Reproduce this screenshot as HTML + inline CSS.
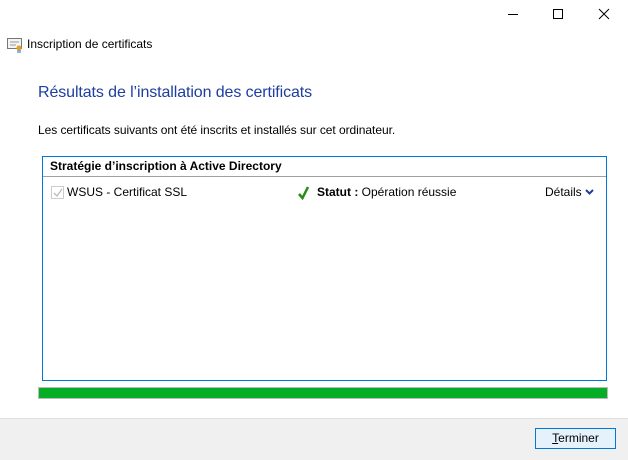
<!DOCTYPE html>
<html><head><meta charset="utf-8"><style>
body{margin:0;width:628px;height:459px;background:#fff;position:relative;font-family:"Segoe UI","Liberation Sans",sans-serif;font-size:12px;color:#000;overflow:hidden}
.a{position:absolute;white-space:nowrap}
</style></head><body>
<svg class="a" style="left:0;top:0" width="628" height="30">
<line x1="508" y1="14.5" x2="518" y2="14.5" stroke="#000"/>
<rect x="553.5" y="9.5" width="9" height="9" fill="none" stroke="#000"/>
<path d="M599 9 L609 19 M609 9 L599 19" stroke="#000"/>
</svg>
<svg class="a" style="left:7px;top:37px" width="17" height="16">
<rect x="0.5" y="1.5" width="14" height="10" fill="#f4f4f4" stroke="#777"/>
<line x1="3" y1="5" x2="12" y2="5" stroke="#999"/><line x1="3" y1="8" x2="9" y2="8" stroke="#999"/>
<circle cx="12" cy="11" r="2.5" fill="#e0a020"/><path d="M11 13 L11 16 M13 13 L13 16" stroke="#2a6ab0"/>
</svg>
<div class="a" style="left:27px;top:37px">Inscription de certificats</div>
<div class="a" style="left:38px;top:84px;font-size:16px;color:#1c3f9f;letter-spacing:-0.1px">Résultats de l’installation des certificats</div>
<div class="a" style="left:38px;top:123px;letter-spacing:-0.05px">Les certificats suivants ont été inscrits et installés sur cet ordinateur.</div>
<div class="a" style="left:42px;top:156px;width:563px;height:223px;border:1px solid #0078d7"></div>
<div class="a" style="left:43px;top:176px;width:563px;height:1px;background:#a0a0a0"></div>
<div class="a" style="left:50px;top:159px;font-weight:bold">Stratégie d’inscription à Active Directory</div>
<div class="a" style="left:51px;top:186px;width:11px;height:11px;border:1px solid #ccc"></div>
<svg class="a" style="left:52px;top:187px" width="12" height="12"><path d="M2 6 L5 9 L10 2" stroke="#bbb" stroke-width="1.3" fill="none"/></svg>
<div class="a" style="left:67px;top:185px">WSUS - Certificat SSL</div>
<svg class="a" style="left:298px;top:186px" width="12" height="14"><path d="M1 8 L4.5 12 L10 1" stroke="#2a8a1a" stroke-width="2.5" fill="none"/></svg>
<div class="a" style="left:317px;top:185px"><b>Statut :</b> Opération réussie</div>
<div class="a" style="left:545px;top:185px">Détails</div>
<svg class="a" style="left:585px;top:189px" width="9" height="6"><path d="M1 1 L4.5 4.5 L8 1" stroke="#1a3e9a" stroke-width="2" fill="none"/></svg>
<div class="a" style="left:38px;top:387px;width:568px;height:10px;background:#06ae25;border:1px solid #bcbcbc"></div>
<div class="a" style="left:0;top:418px;width:628px;height:41px;background:#f0f0f0;border-top:1px solid #dfdfdf"></div>
<div class="a" style="left:535px;top:428px;width:79px;height:19px;background:#e5f1fb;border:1px solid #0078d7;text-align:center;line-height:19px"><u>T</u>erminer</div>
</body></html>
